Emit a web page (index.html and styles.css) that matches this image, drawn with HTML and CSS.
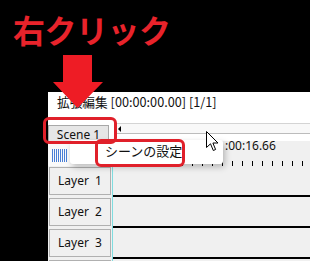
FILE: index.html
```html
<!DOCTYPE html>
<html lang="ja">
<head>
  <meta charset="UTF-8" />
  <title>右クリック - 拡張編集</title>
  <link rel="stylesheet" href="styles.css">
</head>
<body>

  <!-- Caption -->
  <h1 class="caption">右クリック</h1>

  <!-- Big red arrow -->
  <svg class="arrow" width="52" height="54" viewBox="0 0 52 54" aria-hidden="true">
    <polygon points="11,0 40,0 40,27 51,27 25.5,53 1,27 11,27" fill="#ee1c25" />
  </svg>

  <!-- Editor window -->
  <div class="window">
    <div class="titlebar">拡張編集 [00:00:00.00] [1/1]</div>

    <div class="toolbar">
      <div class="scene-btn">Scene 1</div>
      <div class="hscroll">
        <span class="hscroll-arrow"></span>
      </div>
    </div>

    <div class="ruler">
      <div class="ruler-side">
        <span class="wave"></span>
      </div>
      <div class="ruler-main">
        <span class="ruler-time">:00:16.66</span>
      </div>
    </div>

    <div class="layers">
      <div class="layer">
        <div class="layer-head"><span>Layer&nbsp; 1</span></div>
        <div class="layer-track"></div>
      </div>
      <div class="layer">
        <div class="layer-head"><span>Layer&nbsp; 2</span></div>
        <div class="layer-track"></div>
      </div>
      <div class="layer">
        <div class="layer-head"><span>Layer&nbsp; 3</span></div>
        <div class="layer-track"></div>
      </div>
      <div class="layer layer-last">
        <div class="layer-head"><span></span></div>
        <div class="layer-track"></div>
      </div>
    </div>
  </div>

  <!-- Context menu -->
  <div class="context-menu">
    <div class="menu-item">シーンの設定</div>
  </div>

  <!-- Red annotation frames -->
  <div class="mark mark-scene"></div>
  <div class="mark mark-menu"></div>

  <!-- Mouse cursor -->
  <svg class="cursor" width="13" height="21" viewBox="0 0 13 21" aria-hidden="true">
    <path d="M0.5,0.5 L0.5,16.5 L4.5,12.8 L7.3,19.5 L9.6,18.5 L6.9,12 L12,12 Z" fill="#fff" stroke="#000" stroke-width="1" stroke-linejoin="miter" />
  </svg>

</body>
</html>
```

FILE: styles.css
```css
/* Reset */
* {
  margin: 0;
  padding: 0;
  box-sizing: border-box;
}

:root {
  --red: #e8232b;
  --panel: #f0f0f0;
  --ui-font: "Noto Sans", "Noto Sans CJK JP", sans-serif;
}

html, body {
  width: 310px;
  height: 261px;
  overflow: hidden;
}

body {
  background: #000;
  font-family: var(--ui-font);
  position: relative;
}

/* Caption */
.caption {
  height: 92px;
  padding: 6px 0 0 13px;
  font-family: "Noto Sans CJK JP", sans-serif;
  font-size: 32px;
  font-weight: 700;
  line-height: 46px;
  color: var(--red);
  letter-spacing: -0.5px;
}

.arrow {
  position: absolute;
  left: 52px;
  top: 55px;
  z-index: 5;
}

/* Window */
.window {
  margin-left: 48px;
  width: 262px;
  height: 169px;
  overflow: hidden;
  background: var(--panel);
}

.titlebar {
  height: 31px;
  background: #fff;
  padding-left: 9px;
  font-family: "Noto Sans CJK JP", sans-serif;
  font-size: 12.7px;
  line-height: 20px;
  color: #111;
}

.toolbar {
  display: flex;
  height: 18px;
  background: #fff;
}

.scene-btn {
  width: 61px;
  height: 17px;
  margin-top: 2px;
  background: #e6e6e6;
  border: 1px solid #a8a8a8;
  border-bottom: none;
  font-size: 12px;
  line-height: 17px;
  text-align: center;
  color: #111;
}

.hscroll {
  flex: 1;
  height: 11px;
  margin-left: 7px;
  border-top: 1px solid #d4d4d4;
  border-bottom: 1px solid #bcbcbc;
  background: #f8f8f8;
  display: flex;
  align-items: center;
}

.hscroll-arrow {
  width: 0;
  height: 0;
  margin-left: 2px;
  border-top: 3px solid transparent;
  border-bottom: 3px solid transparent;
  border-right: 3px solid #000;
}

.ruler {
  display: flex;
  height: 25px;
}

.ruler-side {
  width: 65px;
  background: #fafafa;
  border-right: 1px solid #7fdde0;
  padding: 8px 0 0 4px;
}

.wave {
  display: block;
  width: 15px;
  height: 13px;
  background: repeating-linear-gradient(90deg, #4a7fd6 0 1px, transparent 1px 2px);
}

.ruler-main {
  flex: 1;
  background:
    repeating-linear-gradient(90deg, transparent 0 9px, #000 9px 10px) left bottom / 100% 5px no-repeat,
    var(--panel);
}

.ruler-time {
  display: block;
  padding-left: 112px;
  margin-top: -1px;
  font-size: 12px;
  line-height: 12px;
  color: #111;
}

/* Layers */
.layer {
  display: flex;
  height: 31px;
}

.layer-head {
  width: 65px;
  padding: 1px 1px 2px 1px;
  border-right: 1px solid #7fdde0;
}

.layer-head span {
  display: block;
  height: 100%;
  border: 1px solid #b0b0b0;
  background: var(--panel);
  font-size: 12px;
  line-height: 26px;
  text-align: center;
  color: #111;
}

.layer-track {
  flex: 1;
  background: var(--panel);
  border-bottom: 2px solid #000;
}

/* Context menu */
.context-menu {
  position: absolute;
  left: 70px;
  top: 140px;
  width: 153px;
  height: 24px;
  background: #fff;
  border-radius: 3px;
  box-shadow: 2px 3px 6px rgba(0, 0, 0, 0.25);
  z-index: 3;
}

.menu-item {
  padding-left: 35px;
  font-family: "Noto Sans CJK JP", sans-serif;
  font-size: 13px;
  line-height: 22px;
  color: #111;
}

/* Red annotation frames */
.mark {
  position: absolute;
  border: 3px solid #e0202a;
  border-radius: 6px;
  z-index: 4;
}

.mark-scene {
  left: 43px;
  top: 117px;
  width: 74px;
  height: 27px;
}

.mark-menu {
  left: 95px;
  top: 139px;
  width: 90px;
  height: 28px;
}

.cursor {
  position: absolute;
  left: 206px;
  top: 131px;
  z-index: 6;
}
```
